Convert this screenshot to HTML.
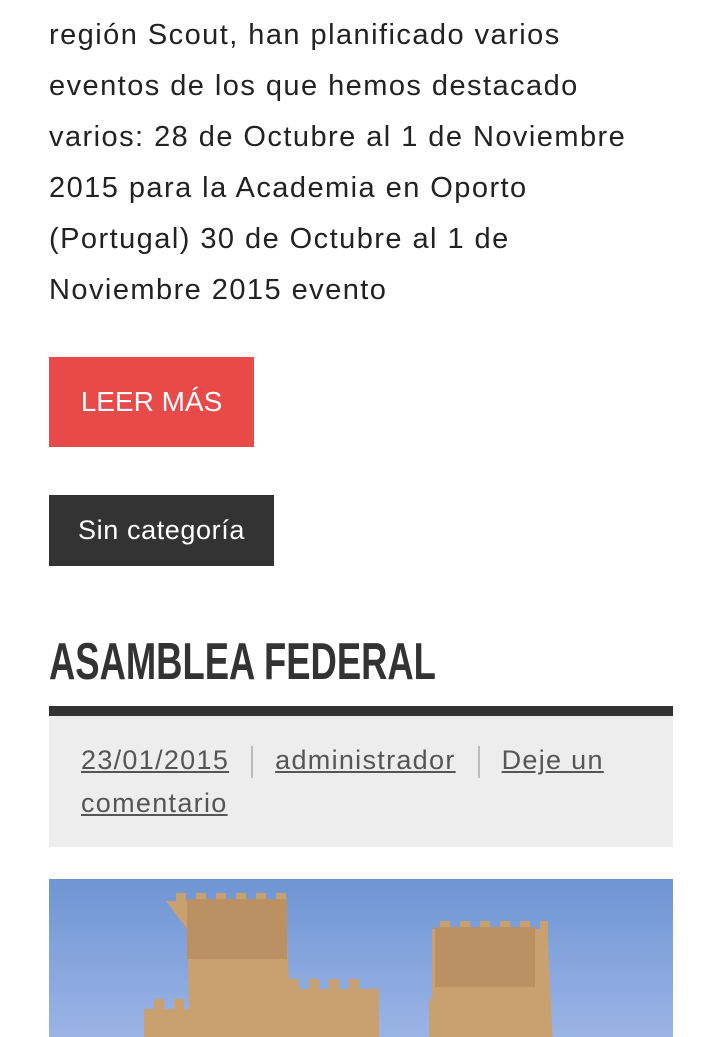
<!DOCTYPE html>
<html><head><meta charset="utf-8"><style>
html,body{margin:0;padding:0;background:#fff;width:720px;height:1037px;overflow:hidden;position:relative;font-family:"Liberation Sans","DejaVu Sans",sans-serif;color:#222}
.txt{position:absolute;left:49px;top:-41px;width:660px;font-size:29px;line-height:51px;color:#222;letter-spacing:1.45px;white-space:nowrap}
.btn1{position:absolute;left:49px;top:357px;width:205px;height:90px;background:#e84a4a;color:#fff;font-size:28px;line-height:90px;text-align:center}
.btn2{position:absolute;left:49px;top:495px;width:225px;height:71px;background:#333;color:#fff;font-size:27px;letter-spacing:0.6px;line-height:71px;text-align:center}
h1{position:absolute;left:49px;top:632px;margin:0;font-family:"Liberation Sans Narrow","Liberation Sans",sans-serif;font-weight:bold;font-size:52px;line-height:60px;color:#333;transform:scaleX(0.70);transform-origin:left;white-space:nowrap}
.bar{position:absolute;left:49px;top:706px;width:624px;height:10px;background:#333}
.meta{position:absolute;left:49px;top:716px;width:624px;height:131px;background:#ededed}
.meta div{position:absolute;left:32px;top:23px;width:570px;font-size:27px;line-height:43px;color:#555;letter-spacing:1.3px}
.meta a{color:#555;text-decoration:underline}
.sep{display:inline-block;width:2px;height:32px;background:#bbb;vertical-align:middle;margin:0 22px}
.img{position:absolute;left:49px;top:879px;width:624px;height:158px;background:linear-gradient(180deg,#6f95d3,#9bb4e6);overflow:hidden}
</style></head><body>
<div class="txt">Europea han, en conjunto con la<br>región Scout, han planificado varios<br>eventos de los que hemos destacado<br>varios: 28 de Octubre al 1 de Noviembre<br>2015 para la Academia en Oporto<br>(Portugal) 30 de Octubre al 1 de<br>Noviembre 2015 evento</div>
<div class="btn1">LEER MÁS</div>
<div class="btn2">Sin categoría</div>
<h1>ASAMBLEA FEDERAL</h1>
<div class="bar"></div>
<div class="meta"><div><a>23/01/2015</a><span class="sep"></span><a>administrador</a><span class="sep"></span><a>Deje un comentario</a></div></div>
<div class="img">
<svg width="624" height="158" viewBox="0 0 624 158">
<g fill="#c9a070">
<path d="M117 22h10v-8h10v8h10v-8h10v8h10v-8h10v8h10v-8h10v8h10v-8h10v8h10v-8h10v24l5 105H140V130l-2-80z"/>
<path d="M383 50h8v-8h10v8h10v-8h10v8h10v-8h10v8h10v-8h10v8h10v-8h10v8h10v-8h8v20l5 110H383z"/>
<path d="M210 110h10v-10h10v10h10v-10h10v10h10v-10h10v10h10v-10h10v10h10v-10h10v10h20v48H210z"/>
<path d="M95 130h10v-10h10v10h10v-10h10v10h10v-10h90v38H95z"/>
<path d="M380 120h10v-10h10v10h10v-10h10v10h10v-10h10v10h10v-10h10v10h10v-10h10v10h8v38H380z"/>
</g>
<rect x="138" y="20" width="100" height="60" fill="#bb9163"/>
<rect x="386" y="48" width="100" height="60" fill="#bb9163"/>
</svg>
</div>
</body></html>
